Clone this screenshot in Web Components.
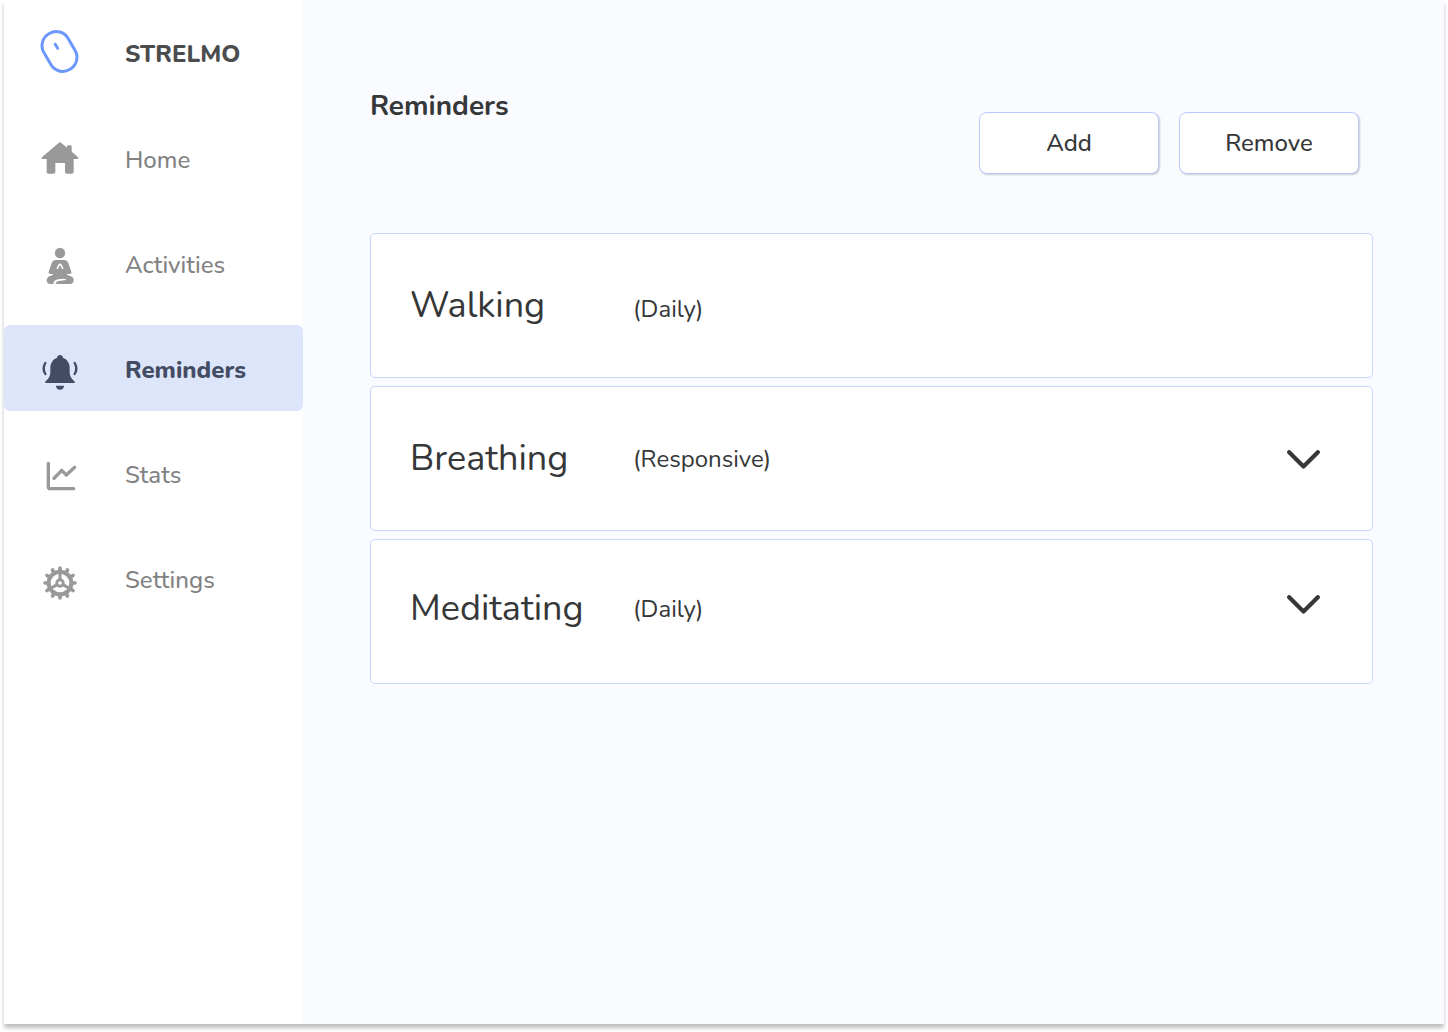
<!DOCTYPE html>
<html lang="en">
<head>
<meta charset="utf-8">
<meta name="viewport" content="width=device-width, initial-scale=1">
<title>Strelmo – Reminders</title>
<style>
  body { margin: 0; background: #fff; font-family: Nunito, Lato, sans-serif; color: #353738; }
</style>
</head>
<body>
<app-shell>
  <app-sidebar slot="sidebar">
    <nav-item label="Home" icon="home"></nav-item>
    <nav-item label="Activities" icon="activities"></nav-item>
    <nav-item label="Reminders" icon="reminders" active></nav-item>
    <nav-item label="Stats" icon="stats"></nav-item>
    <nav-item label="Settings" icon="settings"></nav-item>
  </app-sidebar>
  <page-header>
    Reminders
    <action-button slot="actions">Add</action-button>
    <action-button slot="actions">Remove</action-button>
  </page-header>
  <reminder-list>
    <reminder-card name="Walking" schedule="(Daily)"></reminder-card>
    <reminder-card name="Breathing" schedule="(Responsive)" expandable></reminder-card>
    <reminder-card name="Meditating" schedule="(Daily)" expandable></reminder-card>
  </reminder-list>
</app-shell>

<script>
const ICONS = {
  home: `<svg viewBox="0 0 180 180" aria-hidden="true"><path fill="currentColor" stroke="currentColor" stroke-width="4" stroke-linejoin="round" d="M90 38 L113 57 V50 Q113 48 115 48 H121 Q123 48 123 50 V66 L143 83 Q143 85 141 85 H129 V126 Q129 129 126 129 H110 Q107 129 107 126 V98 Q107 97 106 97 H75 Q74 97 74 98 V126 Q74 129 71 129 H55 Q52 129 52 126 V85 H39 Q37 85 37 83 Z"/></svg>`,
  activities: `<svg viewBox="0 -9 180 180" aria-hidden="true"><g fill="currentColor"><circle cx="90" cy="45" r="15.5"/><path d="M79 66 H101 Q111 66 115 76 L124 101 Q126 107 119 108 Q114 109 110 107 Q110 112 118 113 Q131 116 131 126 Q131 138 119 138 H77 Q78 128 92 128 Q106 128 110 124 Q100 121 84 124 Q70 127 70 138 H61 Q50 138 50 127 Q50 117 62 113 Q70 112 70 107 Q66 109 61 108 Q54 107 56 101 L65 76 Q69 66 79 66 Z"/></g><path fill="none" stroke="#fff" stroke-width="5" stroke-linecap="round" stroke-linejoin="round" d="M82 91 L87 81 Q90 78 93 81 L98 91"/></svg>`,
  reminders: `<svg viewBox="0 -12 180 180" aria-hidden="true"><path fill="currentColor" d="M81 41 Q82 33 90 33 Q98 33 99 41 Q118 49 119 69 V86 Q120 101 132 110 Q135 113 134 117 H46 Q45 113 48 110 Q60 101 61 86 V69 Q62 49 81 41 Z M78 125 H102 Q101 137 90 137 Q79 137 78 125 Z"/><path fill="none" stroke="currentColor" stroke-width="7" stroke-linecap="round" d="M46 57 Q36 74 46 90 M134 57 Q144 74 134 90"/></svg>`,
  stats: `<svg viewBox="0 -3 180 180" aria-hidden="true"><g fill="none" stroke="currentColor" stroke-width="10" stroke-linecap="round" stroke-linejoin="round"><path d="M55 52 V122 Q55 128 61 128 H131"/><path d="M72 97 L95 73 L109 87 L134 64"/></g></svg>`,
  settings: `<svg viewBox="0 -6 180 180" aria-hidden="true"><g transform="translate(90 93)"><g stroke="currentColor" stroke-width="11" stroke-linecap="round"><path d="M0 -45V45M-45 0H45"/><path transform="rotate(30)" d="M0 -45V45M-45 0H45"/><path transform="rotate(60)" d="M0 -45V45M-45 0H45"/></g><circle r="40" fill="currentColor"/><circle r="28" fill="#fff"/><g stroke="currentColor" stroke-width="9"><path d="M0 0V-34M0 0L30 17M0 0L-30 17"/></g><circle r="14" fill="currentColor"/><circle r="5.500" fill="#fff"/></g></svg>`,
  logo: `<svg viewBox="0 12 180 180" aria-hidden="true"><g fill="none" stroke="#6c98fd" stroke-width="9"><rect x="46.5" y="32.5" width="84" height="124" rx="41" transform="rotate(-30 88.5 94.5)"/><path stroke-linecap="round" d="M75.500 72.500 L83 85"/></g></svg>`
};

class BaseElement extends HTMLElement {
  connectedCallback() {
    if (!this.shadowRoot) this.attachShadow({ mode: "open" }).innerHTML = this.render();
  }
}

customElements.define("app-shell", class extends BaseElement {
  render() {
    return `<style>
      :host { display: flex; margin: 0 4px 8px; min-height: calc(100vh - 8px); background: #fff; box-shadow: 0 4px 4px rgba(0,0,0,.25); }
      main { flex: 1; min-width: 0; background: #fafbff; padding: 89px 71px 40px 67px; box-sizing: border-box; }
    </style>
    <slot name="sidebar"></slot>
    <main><slot></slot></main>`;
  }
});

customElements.define("app-sidebar", class extends BaseElement {
  render() {
    return `<style>
      :host { display: block; flex: 0 0 299px; }
      .brand { display: flex; align-items: center; gap: 35px; box-sizing: border-box; height: 104px; padding: 4px 0 0 26px; font-size: 24px; line-height: 32px; font-weight: 800; color: #4b4c4d; }
      svg { width: 60px; height: 60px; flex: none; }
      nav { display: flex; flex-direction: column; gap: 19px; margin-top: 11px; }
    </style>
    <div class="brand">${ICONS.logo}<span>STRELMO</span></div>
    <nav><slot></slot></nav>`;
  }
});

customElements.define("nav-item", class extends BaseElement {
  render() {
    const current = this.hasAttribute("active") ? ' aria-current="page"' : "";
    return `<style>
      :host { display: block; color: #828282; font-weight: 500; }
      :host([active]) { color: #444c63; font-weight: 800; }
      a { display: flex; align-items: center; gap: 35px; box-sizing: border-box; height: 86px; padding: 4px 16px 0 26px; border-radius: 6px; color: inherit; text-decoration: none; font-size: 24px; line-height: 32px; }
      :host([active]) a { background: #dde5fb; }
      svg { width: 60px; height: 60px; flex: none; color: #999; }
      :host([active]) svg { color: #444c63; }
    </style>
    <a href="#${this.getAttribute("icon")}"${current}>${ICONS[this.getAttribute("icon")]}<span>${this.getAttribute("label")}</span></a>`;
  }
});

customElements.define("page-header", class extends BaseElement {
  render() {
    return `<style>
      :host { display: block; }
      header { display: flex; justify-content: space-between; align-items: flex-start; margin-bottom: 59px; }
      h1 { margin: 0; font-size: 28px; line-height: 34px; font-weight: 700; }
      .actions { display: flex; gap: 20px; padding: 23px 14px 0 0; }
    </style>
    <header><h1><slot></slot></h1><div class="actions"><slot name="actions"></slot></div></header>`;
  }
});

customElements.define("action-button", class extends BaseElement {
  render() {
    return `<style>
      :host { display: block; }
      button { width: 180px; height: 62px; padding: 0; border: 1px solid #b5cbfd; border-radius: 8px; background: #fff; box-shadow: 1px 1px 2px rgba(0,0,0,.2); font: inherit; font-size: 24px; line-height: 32px; font-weight: 500; color: inherit; cursor: pointer; display: block; }
    </style>
    <button type="button"><slot></slot></button>`;
  }
});

customElements.define("reminder-list", class extends BaseElement {
  render() {
    return `<style>:host { display: flex; flex-direction: column; gap: 8px; }</style><slot></slot>`;
  }
});

customElements.define("reminder-card", class extends BaseElement {
  render() {
    const name = this.getAttribute("name");
    const toggle = this.hasAttribute("expandable")
      ? `<button type="button" aria-label="Expand ${name}"><svg viewBox="0 0 33 20" aria-hidden="true"><path d="M2.200 2.200 L16.500 16.500 L30.800 2.200" fill="none" stroke="currentColor" stroke-width="4.200" stroke-linecap="round" stroke-linejoin="round"/></svg></button>`
      : "";
    return `<style>
      :host { display: flex; align-items: center; box-sizing: border-box; min-height: 145px; padding: 0 52px 0 39px; border: 1px solid #c6d6fd; border-radius: 5px; background: #fff; }
      :host(:last-of-type) { align-items: flex-start; padding-top: 45px; }
      .text { flex: 1; display: grid; grid-template-columns: 223px 1fr; align-items: center; }
      :host(:not([expandable])) .text { align-items: baseline; }
      h2 { margin: 0; font-size: 36px; line-height: 48px; font-weight: 400; }
      p { margin: 0; font-size: 24px; line-height: 32px; }
      button { display: block; padding: 10px 0 8px; border: 0; background: none; color: inherit; cursor: pointer; }
      svg { display: block; width: 33px; height: 20px; }
    </style>
    <div class="text"><h2>${name}</h2><p>${this.getAttribute("schedule")}</p></div>${toggle}`;
  }
});
</script>
</body>
</html>
